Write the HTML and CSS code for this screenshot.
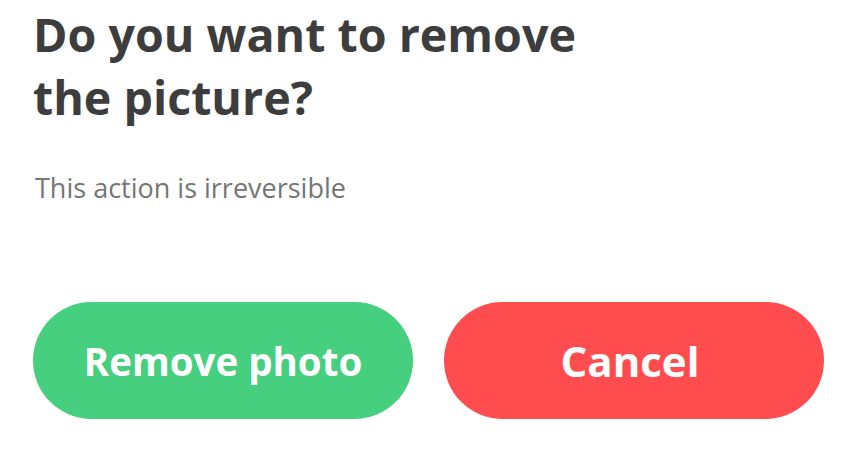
FILE: index.html
```html
<!DOCTYPE html>
<html lang="en">
<head>
    <meta charset="UTF-8">
    <meta name="viewport" content="width=device-width, initial-scale=1.0">
    <title>Remove picture</title>
    <link rel="stylesheet" href="styles.css">
</head>
<body>
    <div class="dialog">
        <h1 class="dialog-title">Do you want to remove<br>the picture?</h1>
        <p class="dialog-text">This action is irreversible</p>
        <div class="dialog-actions">
            <button class="btn btn-confirm">Remove photo</button>
            <button class="btn btn-cancel">Cancel</button>
        </div>
    </div>
</body>
</html>
```

FILE: styles.css
```css
body {
    margin: 0;
    font-family: "Open Sans", Arial, sans-serif;
    background: #fff;
}
.dialog {
    width: 791px;
    padding: 0 0 0 33px;
}
.dialog-title {
    margin: 0;
    padding-top: 3px;
    font-size: 46.6px;
    font-weight: 700;
    line-height: 63px;
    color: #3d3d3d;
}
.dialog-text {
    margin: 41px 0 0 2px;
    font-size: 27px;
    line-height: 36px;
    color: #757575;
}
.dialog-actions {
    display: flex;
    gap: 31px;
    margin-top: 96px;
}
.btn {
    width: 380px;
    height: 117px;
    padding: 0;
    border: none;
    border-radius: 59px;
    font-family: inherit;
    font-weight: 700;
    color: #fff;
    cursor: pointer;
}
.btn-confirm {
    font-size: 38.5px;
    background-color: #45cf7e;
}
.btn-cancel {
    padding-right: 8px;
    font-size: 42px;
    background-color: #ff4d4f;
}
```
